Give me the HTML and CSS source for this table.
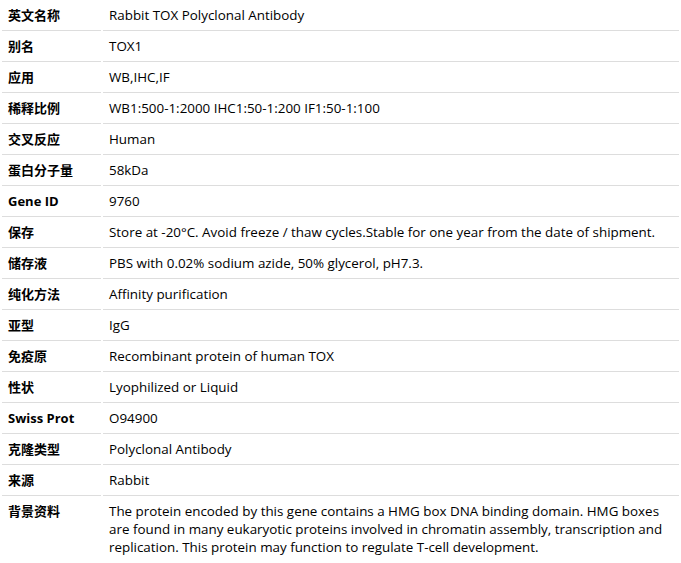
FILE: index.html
```html
<!DOCTYPE html>
<html lang="zh-CN">
<head>
<meta charset="utf-8">
<title>Rabbit TOX Polyclonal Antibody</title>
<link rel="stylesheet" href="styles.css">
</head>
<body>
<table class="spec">
  <tbody>
    <tr><th>英文名称</th><td>Rabbit TOX Polyclonal Antibody</td></tr>
    <tr><th>别名</th><td>TOX1</td></tr>
    <tr><th>应用</th><td>WB,IHC,IF</td></tr>
    <tr><th>稀释比例</th><td>WB1:500-1:2000 IHC1:50-1:200 IF1:50-1:100</td></tr>
    <tr><th>交叉反应</th><td>Human</td></tr>
    <tr><th>蛋白分子量</th><td>58kDa</td></tr>
    <tr><th>Gene ID</th><td>9760</td></tr>
    <tr><th>保存</th><td>Store at -20°C. Avoid freeze / thaw cycles.Stable for one year from the date of shipment.</td></tr>
    <tr><th>储存液</th><td>PBS with 0.02% sodium azide, 50% glycerol, pH7.3.</td></tr>
    <tr><th>纯化方法</th><td>Affinity purification</td></tr>
    <tr><th>亚型</th><td>IgG</td></tr>
    <tr><th>免疫原</th><td>Recombinant protein of human TOX</td></tr>
    <tr><th>性状</th><td>Lyophilized or Liquid</td></tr>
    <tr><th>Swiss Prot</th><td>O94900</td></tr>
    <tr><th>克隆类型</th><td>Polyclonal Antibody</td></tr>
    <tr><th>来源</th><td>Rabbit</td></tr>
    <tr class="last"><th>背景资料</th><td>The protein encoded by this gene contains a HMG box DNA binding domain. HMG boxes are found in many eukaryotic proteins involved in chromatin assembly, transcription and replication. This protein may function to regulate T-cell development.</td></tr>
  </tbody>
</table>
</body>
</html>
```
FILE: styles.css
```css
html, body {
  margin: 0;
  padding: 0;
  background: #ffffff;
}
body {
  font-family: "Open Sans", "Noto Sans CJK SC", sans-serif;
  font-size: 13px;
  color: #000000;
}
.spec {
  width: 681px;
  border-collapse: separate;
  border-spacing: 2px;
}
.spec th,
.spec td {
  padding: 4px 6px 6px;
  line-height: 18px;
  border-bottom: 1px solid #dddddd;
  vertical-align: top;
  text-align: left;
}
.spec th {
  width: 87px;
  font-size: 13px;
  font-weight: bold;
  color: #000000;
  white-space: nowrap;
}
.spec td {
  font-size: 13.4px;
}
.spec tr.last th,
.spec tr.last td {
  border-bottom: none;
}
```
